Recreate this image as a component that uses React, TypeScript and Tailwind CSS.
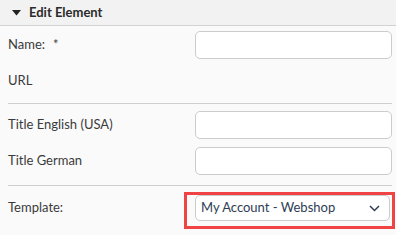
import React from "react";

const font = { fontFamily: "Lato, 'Open Sans', sans-serif" };

function TextInput() {
 return <div className="h-[28px] w-[197px] rounded-[5px] border border-[#cccccc] bg-white" />;
}

function Row({ label, children, required }: { label: string; children?: React.ReactNode; required?: boolean }) {
 return (
 <div className="flex h-[28px] items-center">
 <div className="flex w-[187px] items-center gap-[8px] text-[13px] text-[#3a3a3a]">
 <span>{label}</span>
 {required && <span className="text-[13px] text-[#444]">*</span>}
 </div>
 {children}
 </div>
 );
}

export default function App() {
 return (
 <div className="h-[235px] w-[396px] overflow-hidden bg-[#fafafa]" style={font}>
 <div className="flex h-[26px] items-center gap-[8px] border-b border-[#d2d2d2] bg-[#f2f2f2] pl-[12px]">
 <svg width="9" height="6" viewBox="0 0 9 6">
 <path d="M0 0h9L4.5 5.5z" fill="#222" />
 </svg>
 <span className="text-[13px] font-bold text-[#2a2a2a]">Edit Element</span>
 </div>

 <div className="pl-[8px] pr-[4px] pt-[5px]">
 <Row label="Name:" required>
 <TextInput />
 </Row>
 <div className="mt-[8px]">
 <Row label="URL" />
 </div>
 <div className="mt-[8px] border-t border-[#cfcfcf]" />

 <div className="mt-[7px] flex flex-col gap-[8px]">
 <Row label="Title English (USA)">
 <TextInput />
 </Row>
 <Row label="Title German">
 <TextInput />
 </Row>
 </div>
 <div className="mt-[10px] border-t border-[#cfcfcf]" />

 <div className="mt-[9px]">
 <div className="flex h-[26px] items-center">
 <div className="w-[187px] text-[13px] text-[#3a3a3a]">Template:</div>
 <div className="relative">
 <div className="absolute -bottom-[8px] -left-[11px] -right-[5px] -top-[3px] border-[3px] border-[#f04444]" />
 <div className="flex h-[26px] w-[195px] items-center justify-between rounded-[5px] border border-[#cccccc] bg-white pl-[5px] pr-[9px] text-[13px] text-[#2e3d55]">
 <span>My Account - Webshop</span>
 <svg width="11" height="7" viewBox="0 0 11 7">
 <path d="M1 1l4.5 4.5L10 1" fill="none" stroke="#2e3d55" strokeWidth="1.5" />
 </svg>
 </div>
 </div>
 </div>
 </div>
 </div>
 </div>
 );
}
